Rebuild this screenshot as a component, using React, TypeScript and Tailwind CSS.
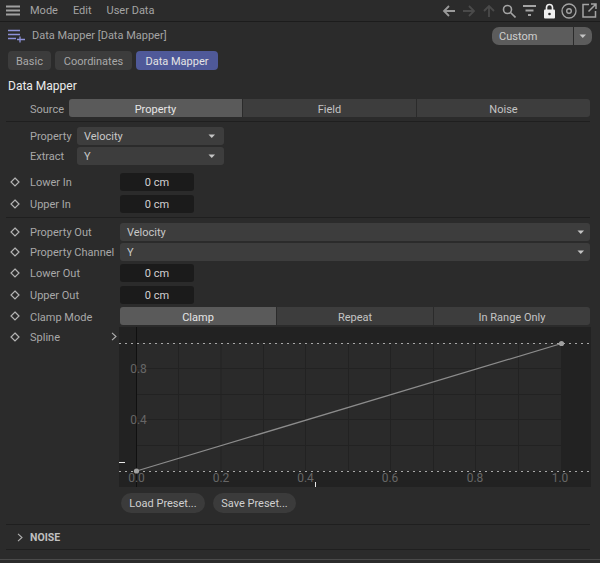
import React from "react";

const Diamond = () => (
  <svg width="10" height="10" viewBox="0 0 10 10" className="shrink-0">
    <path d="M5 1 L9 5 L5 9 L1 5 Z" fill="none" stroke="#b4b4b4" strokeWidth="1.2" />
  </svg>
);

const Caret = () => (
  <svg width="8" height="5" viewBox="0 0 8 5" className="shrink-0">
    <path d="M0.5 0.5 H7 L3.75 4 Z" fill="#c4c4c4" />
  </svg>
);

const Row = ({ label, top, labelPad = "pt-px", children }: { label: string; top: string; labelPad?: string; children: React.ReactNode }) => (
  <div className={`flex items-center h-[18px] ${top}`}>
    <div className="w-[30px] pl-[10px] shrink-0 flex items-center"><Diamond /></div>
    <div className={`w-[90px] shrink-0 text-[#a8a8a8] whitespace-nowrap ${labelPad}`}>{label}</div>
    {children}
  </div>
);

const NumField = () => (
  <div className="w-[74px] h-[18px] pt-px rounded-[3px] bg-[#1b1b1b] text-[#d2d2d2] flex items-center justify-center">0 cm</div>
);

const WideSelect = ({ value }: { value: string }) => (
  <div className="w-[470px] h-[18px] rounded-[3px] bg-[#3d3d3d] text-[#c8c8c8] flex items-center justify-between pl-[7px] pr-[5px]">
    <span className="pt-px">{value}</span>
    <Caret />
  </div>
);

const SmallSelect = ({ value }: { value: string }) => (
  <div className="w-[147px] h-[18px] rounded-[3px] bg-[#3d3d3d] text-[#c8c8c8] flex items-center justify-between pl-[7px] pr-[8px]">
    <span className="pt-px">{value}</span>
    <Caret />
  </div>
);

const Segments = ({ items, w }: { items: string[]; w: string }) => (
  <div className={`flex gap-px h-[18px] rounded-[3px] overflow-hidden ${w}`}>
    {items.map((t, i) => (
      <div
        key={t}
        className={`flex-1 flex items-center justify-center pt-[2px] ${i === 0 ? "bg-[#5a5a5a] text-[#e6e6e6]" : "bg-[#3d3d3d] text-[#c4c4c4]"}`}
      >
        {t}
      </div>
    ))}
  </div>
);

const Divider = ({ className }: { className: string }) => <div className={`ml-[6px] mr-[10px] h-px bg-[#1f1f1f] ${className}`} />;

const Chart = () => {
  const v = [178.5, 221, 263.5, 305.5, 348.5, 390.5, 433.5, 475.5, 518.5];
  const h = [368.5, 394.5, 419.5, 445.5];
  return (
    <svg width="472" height="160" viewBox="119 327 472 160" className="block">
      <rect x="119" y="327" width="472" height="160" fill="#222222" />
      <rect x="136.5" y="343" width="424.5" height="128" fill="#2a2a2a" />
      {v.map((x) => (
        <line key={x} x1={x} x2={x} y1="327" y2="487" stroke="#222222" strokeWidth="1" />
      ))}
      {h.map((y) => (
        <line key={y} x1="119" x2="591" y1={y} y2={y} stroke="#222222" strokeWidth="1" />
      ))}
      <line x1="136.5" x2="136.5" y1="327" y2="487" stroke="#101010" strokeWidth="1" />
      <line x1="119" x2="591" y1="343.5" y2="343.5" stroke="#a8a8a8" strokeWidth="1" strokeDasharray="2 4" />
      <line x1="119" x2="591" y1="471.5" y2="471.5" stroke="#a8a8a8" strokeWidth="1" strokeDasharray="2 4" />
      <line x1="136.5" y1="471" x2="561.5" y2="343.5" stroke="#8c8c8c" strokeWidth="1.2" />
      <circle cx="136.5" cy="471" r="2.6" fill="#a0a0a0" />
      <circle cx="561.5" cy="343.5" r="2.6" fill="#a0a0a0" />
      <g fill="#666666" fontSize="12" textAnchor="middle" fontFamily="'Roboto', sans-serif">
        <text x="138.5" y="373">0.8</text>
        <text x="138.5" y="424">0.4</text>
        <text x="136.5" y="482">0.0</text>
        <text x="221" y="482">0.2</text>
        <text x="305.5" y="482">0.4</text>
        <text x="390" y="482">0.6</text>
        <text x="475" y="482">0.8</text>
        <text x="560" y="482">1.0</text>
      </g>
      <rect x="119" y="462" width="6" height="1" fill="#e8e8e8" />
      <rect x="315" y="482" width="1" height="5" fill="#e8e8e8" />
    </svg>
  );
};

export default function App() {
  return (
    <div className="relative w-[600px] h-[563px] overflow-hidden bg-[#2b2b2b] text-[11px] leading-none font-['Roboto',sans-serif]">
      {/* menu bar */}
      <div className="h-[22px] border-b border-[#1c1c1c] flex items-center pl-[6px] pr-[3px] text-[#a4a4a4]">
        <svg width="14" height="11" viewBox="0 0 14 11" className="shrink-0">
          <path d="M0 1.5H14M0 5.5H14M0 9.5H14" stroke="#a0a0a0" strokeWidth="2" />
        </svg>
        <span className="ml-[10px]">Mode</span>
        <span className="ml-[15px]">Edit</span>
        <span className="ml-[15px]">User Data</span>
        <div className="ml-auto flex items-center gap-[6px]">
          <svg width="14" height="14" viewBox="0 0 14 14" fill="none" stroke="#9a9a9a" strokeWidth="1.8"><path d="M13 7H2M7 2 2 7l5 5" /></svg>
          <svg width="14" height="14" viewBox="0 0 14 14" fill="none" stroke="#4a4a4a" strokeWidth="1.8"><path d="M1 7h11M7 2l5 5-5 5" /></svg>
          <svg width="14" height="14" viewBox="0 0 14 14" fill="none" stroke="#4a4a4a" strokeWidth="1.8"><path d="M7 13V2M2 7l5-5 5 5" /></svg>
          <svg width="14" height="14" viewBox="0 0 14 14" fill="none" stroke="#a4a4a4" strokeWidth="1.6"><circle cx="5.5" cy="5.5" r="4" /><path d="m8.5 8.5 5 5" /></svg>
          <svg width="15" height="12" viewBox="0 0 15 12" fill="none" stroke="#a4a4a4" strokeWidth="2"><path d="M1 1h13M3.5 5.5h8M6 10h3" /></svg>
          <svg width="13" height="16" viewBox="0 0 13 16"><path d="M3.5 7V4.5a3 3 0 0 1 6 0V7" fill="none" stroke="#f0f0f0" strokeWidth="1.6" /><rect x="1" y="6.5" width="11" height="9" rx="1" fill="#f0f0f0" /><circle cx="6.5" cy="11" r="1.3" fill="#2b2b2b" /></svg>
          <svg width="16" height="16" viewBox="0 0 16 16" fill="none" stroke="#a4a4a4" className="-ml-px"><circle cx="8" cy="8" r="7" strokeWidth="1.3" /><circle cx="8" cy="8" r="2.3" strokeWidth="1.4" /></svg>
          <svg width="15" height="15" viewBox="0 0 15 15" fill="none" stroke="#a4a4a4" strokeWidth="1.5" className="-ml-px"><path d="M7 1.5H1v12.5h12.5V8M9 1h5v5M14 1 6.5 8.5" /></svg>
        </div>
      </div>

      {/* title row */}
      <div className="h-[29px] flex items-start pt-[5px] pl-[8px] pr-[8px]">
        <svg width="18" height="14" viewBox="0 0 18 14" className="shrink-0 mt-[2px]" fill="none" stroke="#8d91d8" strokeWidth="1.3">
          <path d="M0 1.5H12M0 5.5H12M0 9.5H8M12 7.5v6M9 10.5h8" />
        </svg>
        <span className="ml-[6px] mt-[3px] text-[#a4a4a4]">Data Mapper [Data Mapper]</span>
        <div className="ml-auto w-[100px] h-[18px] rounded-[7px] bg-[#5c5c5c] flex overflow-hidden text-[#cfcfcf]">
          <div className="flex-1 flex items-center pl-[7px] pt-px">Custom</div>
          <div className="w-[19px] border-l border-[#2b2b2b] flex items-center justify-center"><Caret /></div>
        </div>
      </div>

      {/* tabs */}
      <div className="flex gap-[4px] pl-[8px] text-[#a8a8a8]">
        <div className="w-[43px] h-[19px] pt-[2px] rounded-[4px] bg-[#3c3c3c] flex items-center justify-center">Basic</div>
        <div className="w-[77px] h-[19px] pt-[2px] rounded-[4px] bg-[#3c3c3c] flex items-center justify-center">Coordinates</div>
        <div className="w-[82px] h-[19px] pt-[2px] rounded-[4px] bg-[#4f5999] text-[#e4e4e4] flex items-center justify-center">Data Mapper</div>
      </div>

      <div className="mt-[9px] pl-[8px] text-[#ececec] text-[12px] h-[14px] flex items-center">Data Mapper</div>

      {/* source */}
      <div className="flex items-center mt-[6px] h-[18px]">
        <div className="w-[69px] pl-[30px] pt-[2px] text-[#a8a8a8] shrink-0">Source</div>
        <Segments items={["Property", "Field", "Noise"]} w="w-[521px]" />
      </div>
      <Divider className="mt-[4px]" />

      <div className="flex items-center mt-[5px] h-[18px]">
        <div className="w-[77px] pl-[30px] pt-px text-[#a8a8a8] shrink-0">Property</div>
        <SmallSelect value="Velocity" />
      </div>
      <div className="flex items-center mt-[2px] h-[18px]">
        <div className="w-[77px] pl-[30px] pt-px text-[#a8a8a8] shrink-0">Extract</div>
        <SmallSelect value="Y" />
      </div>

      <Row label="Lower In" top="mt-[8px]"><NumField /></Row>
      <Row label="Upper In" top="mt-[4px]"><NumField /></Row>
      <Divider className="mt-[4px]" />

      <Row label="Property Out" top="mt-[5px]"><WideSelect value="Velocity" /></Row>
      <Row label="Property Channel" top="mt-[2px]"><WideSelect value="Y" /></Row>
      <Row label="Lower Out" top="mt-[3px]"><NumField /></Row>
      <Row label="Upper Out" top="mt-[4px]"><NumField /></Row>
      <Row label="Clamp Mode" top="mt-[3px]" labelPad="pt-[2px]">
        <Segments items={["Clamp", "Repeat", "In Range Only"]} w="w-[470px]" />
      </Row>

      {/* spline */}
      <div className="flex mt-[2px]">
        <div className="w-[30px] pl-[10px] pt-[5px] shrink-0"><Diamond /></div>
        <div className="w-[89px] shrink-0 flex justify-between pt-[5px] pr-[2px] text-[#a8a8a8]">
          <span>Spline</span>
          <svg width="6" height="9" viewBox="0 0 6 9" fill="none" stroke="#b0b0b0" strokeWidth="1.1"><path d="m1 .8 4 3.7-4 3.7" /></svg>
        </div>
        <Chart />
      </div>

      {/* presets */}
      <div className="flex gap-[8px] ml-[121px] mt-[6px] text-[#d0d0d0]">
        <div className="w-[84px] h-[20px] pt-px rounded-[10px] bg-[#3b3b3b] flex items-center justify-center">Load Preset...</div>
        <div className="w-[83px] h-[20px] pt-px rounded-[10px] bg-[#3b3b3b] flex items-center justify-center">Save Preset...</div>
      </div>

      <Divider className="mt-[11px]" />
      <div className="h-[24px] flex items-center pl-[17px]">
        <svg width="6" height="9" viewBox="0 0 6 9" fill="none" stroke="#b0b0b0" strokeWidth="1.1"><path d="m1 .8 4 3.7-4 3.7" /></svg>
        <span className="ml-[7px] pt-[2px] font-bold text-[10.5px] text-[#c0c0c0]">NOISE</span>
      </div>
      <Divider className="" />
      <div className="mt-[9px] h-px bg-[#4a4a4a]" />
    </div>
  );
}
